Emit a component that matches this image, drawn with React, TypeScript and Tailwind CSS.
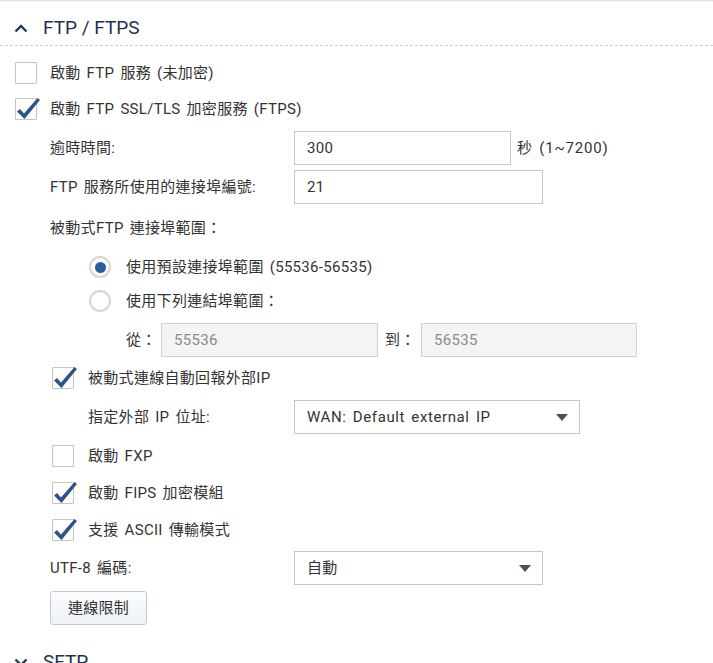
function Check({ on }: { on: boolean }) {
  return (
    <span className="relative inline-block w-[22px] h-[22px] shrink-0 border border-[#c4c4c4] bg-white rounded-[1px]">
      {on && (
        <svg className="absolute left-[-1px] top-[-2px] overflow-visible" width="26" height="24" viewBox="0 0 26 24">
          <path d="M2 14.5 L5 12 L9 16.5 L22.5 1 L25 3 L9.5 22 Z" fill="#2b5488" />
        </svg>
      )}
    </span>
  );
}

function Radio({ on }: { on: boolean }) {
  return (
    <span className="flex items-center justify-center w-[22px] h-[22px] shrink-0 rounded-full border-2 border-[#d6d6d6] bg-white">
      {on && <span className="block w-[11px] h-[11px] rounded-full bg-[#2a5e9f]" />}
    </span>
  );
}

function Caret() {
  return (
    <svg width="12" height="7" viewBox="0 0 12 7">
      <path d="M0 0 H12 L6 7 Z" fill="#4a515c" />
    </svg>
  );
}

export default function App() {
  return (
    <div className="w-[713px] h-[663px] overflow-hidden bg-white text-[15px] text-[#333] tracking-[0.3px] [word-spacing:2px] font-['Roboto','Noto_Sans_CJK_TC',sans-serif]">
      <div className="h-[2px] bg-gradient-to-b from-[#dcdcdc] to-white" />
      {/* section header */}
      <div className="h-[44px] pt-[9px] flex items-center border-b border-dashed border-[#cfcfcf]">
        <svg className="ml-[14px]" width="14" height="9" viewBox="0 0 14 9">
          <polyline points="1.5,7.5 7,2 12.5,7.5" fill="none" stroke="#24395a" strokeWidth="2.4" />
        </svg>
        <span className="ml-[15px] text-[19px] tracking-[0px] [word-spacing:0px] text-[#1d3152]">FTP / FTPS</span>
      </div>

      <div className="mt-[9px] h-[36px] flex items-center pl-[15px]">
        <Check on={false} />
        <span className="ml-[13px]">啟動 FTP 服務 (未加密)</span>
      </div>
      <div className="h-[36px] flex items-center pl-[15px]">
        <Check on={true} />
        <span className="ml-[13px]">啟動 FTP SSL/TLS 加密服務 (FTPS)</span>
      </div>

      <div className="mt-[2px] h-[38px] flex items-center pl-[50px]">
        <span className="w-[244px]">逾時時間:</span>
        <div className="w-[217px] h-[34px] border border-[#c6c6c6] flex items-center px-[12px]">300</div>
        <span className="ml-[6px] tracking-[0.8px]">秒 (1~7200)</span>
      </div>
      <div className="mt-[1px] h-[38px] flex items-center pl-[50px]">
        <span className="w-[244px]">FTP 服務所使用的連接埠編號:</span>
        <div className="w-[249px] h-[34px] border border-[#c6c6c6] flex items-center px-[12px]">21</div>
      </div>

      <div className="mt-[4px] h-[36px] flex items-center pl-[50px]">被動式FTP 連接埠範圍：</div>
      <div className="mt-[4px] h-[34px] flex items-center pl-[89px]">
        <Radio on={true} />
        <span className="ml-[15px]">使用預設連接埠範圍 (55536-56535)</span>
      </div>
      <div className="h-[34px] flex items-center pl-[89px]">
        <Radio on={false} />
        <span className="ml-[15px]">使用下列連結埠範圍：</span>
      </div>
      <div className="mt-[3px] h-[38px] flex items-center pl-[126px]">
        <span className="w-[35px]">從：</span>
        <div className="w-[217px] h-[34px] border border-[#d0d0d0] bg-[#f4f4f4] text-[#8c8c8c] flex items-center px-[12px]">55536</div>
        <span className="ml-[7px] w-[36px]">到：</span>
        <div className="w-[216px] h-[34px] border border-[#d0d0d0] bg-[#f4f4f4] text-[#8c8c8c] flex items-center px-[12px]">56535</div>
      </div>

      <div className="mt-[1px] h-[36px] flex items-center pl-[52px]">
        <Check on={true} />
        <span className="ml-[14px]">被動式連線自動回報外部IP</span>
      </div>
      <div className="mt-[2px] h-[38px] flex items-center pl-[88px]">
        <span className="w-[206px]">指定外部 IP 位址:</span>
        <div className="w-[286px] h-[34px] border border-[#c6c6c6] flex items-center justify-between pl-[12px] pr-[11px]">
          <span className="tracking-[0.6px]">WAN: Default external IP</span>
          <Caret />
        </div>
      </div>

      <div className="mt-[2px] h-[36px] flex items-center pl-[52px]">
        <Check on={false} />
        <span className="ml-[14px]">啟動 FXP</span>
      </div>
      <div className="mt-[1px] h-[36px] flex items-center pl-[52px]">
        <Check on={true} />
        <span className="ml-[14px]">啟動 FIPS 加密模組</span>
      </div>
      <div className="mt-[1px] h-[36px] flex items-center pl-[52px]">
        <Check on={true} />
        <span className="ml-[14px]">支援 ASCII 傳輸模式</span>
      </div>

      <div className="mt-[1px] h-[38px] flex items-center pl-[50px]">
        <span className="w-[244px]">UTF-8 編碼:</span>
        <div className="w-[249px] h-[34px] border border-[#c6c6c6] flex items-center justify-between pl-[12px] pr-[11px]">
          <span>自動</span>
          <Caret />
        </div>
      </div>

      <div className="mt-[4px] pl-[50px]">
        <button className="w-[97px] h-[34px] rounded-[3px] border border-[#c3cad3] bg-gradient-to-b from-[#fbfcfd] to-[#eef2f6] text-[15px] text-[#333]">
          連線限制
        </button>
      </div>

      <div className="mt-[22px] h-[30px] flex items-center">
        <svg className="ml-[14px]" width="14" height="9" viewBox="0 0 14 9">
          <polyline points="1.5,1.5 7,7 12.5,1.5" fill="none" stroke="#24395a" strokeWidth="2.4" />
        </svg>
        <span className="ml-[15px] text-[19px] tracking-[0px] text-[#1d3152]">SFTP</span>
      </div>
    </div>
  );
}
